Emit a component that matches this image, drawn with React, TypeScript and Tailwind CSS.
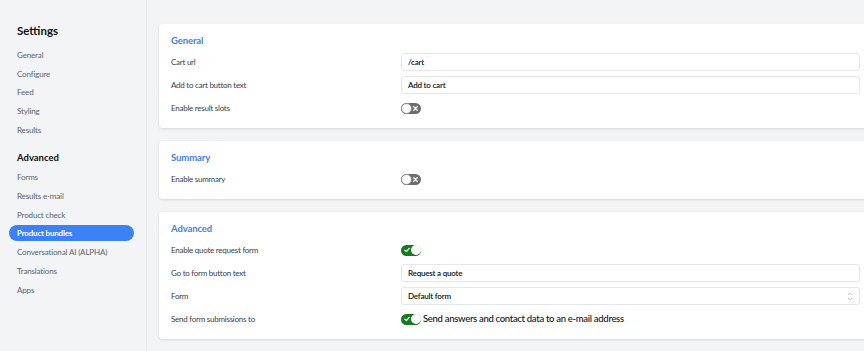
import React from "react";

const font = { fontFamily: "Lato, 'Open Sans', sans-serif" };

function Toggle({ on }: { on: boolean }) {
  if (on) {
    return (
      <div className="relative w-[20px] h-[11px] rounded-full bg-[#137a1d] shrink-0">
        <svg className="absolute left-[3px] top-[2.5px]" width="6" height="6" viewBox="0 0 6 6">
          <path d="M0.8 3.1 L2.4 4.6 L5.2 1.4" stroke="white" strokeWidth="1.3" fill="none" strokeLinecap="round" strokeLinejoin="round" />
        </svg>
        <div className="absolute right-[0.5px] top-[0.5px] w-[10px] h-[10px] rounded-full bg-white" />
      </div>
    );
  }
  return (
    <div className="relative w-[20px] h-[11px] rounded-full bg-[#6e6e6e] shrink-0">
      <div className="absolute left-0 top-0 w-[11px] h-[11px] rounded-full bg-white border border-[#8a8a8a]" />
      <svg className="absolute right-[3px] top-[3px]" width="5" height="5" viewBox="0 0 5 5">
        <path d="M0.8 0.8 L4.2 4.2 M4.2 0.8 L0.8 4.2" stroke="white" strokeWidth="1.3" strokeLinecap="round" />
      </svg>
    </div>
  );
}

function Row({ label, children }: { label: string; children: React.ReactNode }) {
  return (
    <div className="flex items-center h-[18px]">
      <div className="w-[230px] shrink-0 text-[8px] tracking-[-0.25px] text-[#3a404c]">{label}</div>
      <div className="flex-1 flex items-center h-full">{children}</div>
    </div>
  );
}

function Input({ value, select }: { value: string; select?: boolean }) {
  return (
    <div className="w-[459px] h-[18px] rounded-[3px] border border-[#e4e6ea] bg-white flex items-center pl-[6px] pr-[6px] text-[8px] tracking-[-0.2px] font-semibold text-[#111] justify-between">
      <span>{value}</span>
      {select && (
        <svg width="6" height="9" viewBox="0 0 6 9">
          <path d="M1 3 L3 1 L5 3 M1 6 L3 8 L5 6" stroke="#b9bdc3" strokeWidth="0.8" fill="none" />
        </svg>
      )}
    </div>
  );
}

function Card({ title, children }: { title: string; children: React.ReactNode }) {
  return (
    <div className="w-[713px] bg-white rounded-[4px] shadow-[0_1px_3px_rgba(0,0,0,0.12)] pl-[12px] pt-[11px] pb-[11px]">
      <div className="h-[12px] flex items-center text-[9.5px] tracking-[-0.1px] font-bold text-[#3f7ff0]">{title}</div>
      <div className="mt-[6px] flex flex-col gap-[5px]">{children}</div>
    </div>
  );
}

export default function App() {
  const nav1 = ["General", "Configure", "Feed", "Styling", "Results"];
  const nav2 = ["Forms", "Results e-mail", "Product check", "Product bundles", "Conversational AI (ALPHA)", "Translations", "Apps"];
  return (
    <div className="w-[864px] h-[351px] overflow-hidden flex bg-[#f3f4f6]" style={font}>
      <aside className="w-[147px] shrink-0 h-full border-r border-[#e7e8eb] pl-[9px] pt-[24px]">
        <div className="pl-[8px] h-[14px] flex items-center text-[11.5px] font-bold text-[#111]">Settings</div>
        <div className="mt-[9px] flex flex-col gap-[2.7px]">
          {nav1.map((n) => (
            <div key={n} className="h-[16px] flex items-center pl-[8px] text-[8px] tracking-[-0.15px] text-[#5b6270]">{n}</div>
          ))}
        </div>
        <div className="mt-[13px] pl-[8px] h-[14px] flex items-center text-[9.5px] font-bold text-[#111]">Advanced</div>
        <div className="mt-[4px] flex flex-col gap-[2.9px]">
          {nav2.map((n) => (
            <div
              key={n}
              className={
                n === "Product bundles"
                  ? "w-[125px] h-[16px] flex items-center pl-[8px] rounded-full bg-[#3b82f6] text-white font-bold text-[8px] tracking-[-0.2px]"
                  : "h-[16px] flex items-center pl-[8px] text-[8px] tracking-[-0.15px] text-[#5b6270]"
              }
            >
              {n}
            </div>
          ))}
        </div>
      </aside>
      <main className="flex-1 pl-[12px] pt-[24px] flex flex-col gap-[13px]">
        <Card title="General">
          <Row label="Cart url"><Input value="/cart" /></Row>
          <Row label="Add to cart button text"><Input value="Add to cart" /></Row>
          <Row label="Enable result slots"><Toggle on={false} /></Row>
        </Card>
        <Card title="Summary">
          <Row label="Enable summary"><Toggle on={false} /></Row>
        </Card>
        <Card title="Advanced">
          <Row label="Enable quote request form"><Toggle on={true} /></Row>
          <Row label="Go to form button text"><Input value="Request a quote" /></Row>
          <Row label="Form"><Input value="Default form" select /></Row>
          <Row label="Send form submissions to">
            <Toggle on={true} />
            <span className="ml-[2px] text-[9.5px] tracking-[-0.3px] font-medium text-[#111]">Send answers and contact data to an e-mail address</span>
          </Row>
        </Card>
      </main>
    </div>
  );
}
